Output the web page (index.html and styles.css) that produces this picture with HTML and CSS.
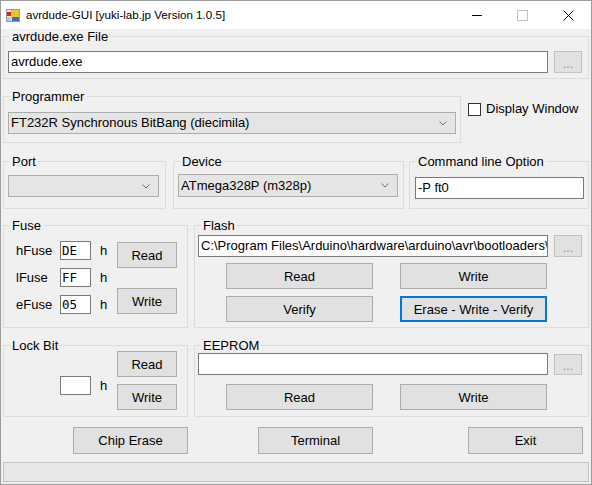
FILE: index.html
```html
<!DOCTYPE html>
<html>
<head>
<meta charset="utf-8">
<title>avrdude-GUI</title>
<link rel="stylesheet" href="styles.css">
</head>
<body>
<div class="window">
  <div class="titlebar">
    <svg class="app-icon" width="14" height="13" viewBox="0 0 14 13">
      <rect x="0.5" y="0.5" width="13" height="12" fill="#e8e8e8" stroke="#9a9a9a"/>
      <rect x="1" y="3" width="4" height="4" fill="#d9261c"/>
      <rect x="5" y="1" width="8" height="7" fill="#f2c22e"/>
      <rect x="6" y="8" width="7" height="4" fill="#2f6fd6"/>
      <rect x="1" y="8" width="4" height="4" fill="#c8c8c8"/>
    </svg>
    <span class="title-text">avrdude-GUI [yuki-lab.jp Version 1.0.5]</span>
    <div class="win-controls">
      <svg class="ctl ctl-min" width="11" height="11" viewBox="0 0 11 11"><line x1="0" y1="5.5" x2="10" y2="5.5" stroke="#000" stroke-width="1"/></svg>
      <svg class="ctl ctl-max" width="11" height="11" viewBox="0 0 11 11"><rect x="0.5" y="0.5" width="10" height="10" fill="none" stroke="#c4c4c4"/></svg>
      <svg class="ctl ctl-close" width="11" height="11" viewBox="0 0 11 11"><path d="M0.5 0.5 L10.5 10.5 M10.5 0.5 L0.5 10.5" stroke="#000" stroke-width="1"/></svg>
    </div>
  </div>

  <div class="client">
    <div class="group g-file">
      <span class="legend">avrdude.exe File</span>
      <div class="path-row">
        <div class="textbox tb-file">avrdude.exe</div>
        <div class="browse">...</div>
      </div>
    </div>

    <div class="row r-prog">
      <div class="group g-prog">
        <span class="legend">Programmer</span>
        <div class="combo cb-prog"><span class="combo-text">FT232R Synchronous BitBang (diecimila)</span><svg class="chev" width="8" height="5" viewBox="0 0 8 5"><path d="M0.5 0.5 L4 4 L7.5 0.5" fill="none" stroke="#6d6d6d"/></svg></div>
      </div>
      <div class="check">
        <span class="check-box"></span>
        <span class="check-label">Display Window</span>
      </div>
    </div>

    <div class="row r-port">
      <div class="group g-port">
        <span class="legend">Port</span>
        <div class="combo cb-port"><span class="combo-text"></span><svg class="chev" width="8" height="5" viewBox="0 0 8 5"><path d="M0.5 0.5 L4 4 L7.5 0.5" fill="none" stroke="#6d6d6d"/></svg></div>
      </div>
      <div class="group g-device">
        <span class="legend">Device</span>
        <div class="combo cb-device"><span class="combo-text">ATmega328P (m328p)</span><svg class="chev" width="8" height="5" viewBox="0 0 8 5"><path d="M0.5 0.5 L4 4 L7.5 0.5" fill="none" stroke="#6d6d6d"/></svg></div>
      </div>
      <div class="group g-cmd">
        <span class="legend">Command line Option</span>
        <div class="textbox tb-cmd">-P ft0</div>
      </div>
    </div>

    <div class="row r-fuse">
      <div class="group g-fuse">
        <span class="legend">Fuse</span>
        <div class="fuse-body">
          <div class="fuse-grid">
            <span class="f-label">hFuse</span><div class="textbox hex">DE</div><span class="f-h">h</span>
            <span class="f-label">lFuse</span><div class="textbox hex">FF</div><span class="f-h">h</span>
            <span class="f-label">eFuse</span><div class="textbox hex">05</div><span class="f-h">h</span>
          </div>
          <div class="fuse-buttons">
            <div class="btn btn-small">Read</div>
            <div class="btn btn-small btn-write-fuse">Write</div>
          </div>
        </div>
      </div>
      <div class="group g-flash">
        <span class="legend">Flash</span>
        <div class="path-row">
          <div class="textbox tb-path">C:\Program Files\Arduino\hardware\arduino\avr\bootloaders\</div>
          <div class="browse">...</div>
        </div>
        <div class="btn-grid flash-grid">
          <div class="btn btn-wide">Read</div>
          <div class="btn btn-wide">Write</div>
          <div class="btn btn-wide">Verify</div>
          <div class="btn btn-wide btn-focus">Erase - Write - Verify</div>
        </div>
      </div>
    </div>

    <div class="row r-lock">
      <div class="group g-lock">
        <span class="legend">Lock Bit</span>
        <div class="lock-body">
          <div class="lock-left">
            <div class="textbox hex"></div><span class="f-h">h</span>
          </div>
          <div class="fuse-buttons lock-buttons">
            <div class="btn btn-small">Read</div>
            <div class="btn btn-small">Write</div>
          </div>
        </div>
      </div>
      <div class="group g-eeprom">
        <span class="legend">EEPROM</span>
        <div class="path-row">
          <div class="textbox tb-path"></div>
          <div class="browse browse-ee">...</div>
        </div>
        <div class="btn-grid eeprom-grid">
          <div class="btn btn-wide">Read</div>
          <div class="btn btn-wide">Write</div>
        </div>
      </div>
    </div>

    <div class="row r-buttons">
      <div class="btn btn-main btn-chip">Chip Erase</div>
      <div class="btn btn-main btn-term">Terminal</div>
      <div class="btn btn-main btn-exit">Exit</div>
    </div>

    <div class="status"></div>
  </div>
</div>
</body>
</html>
```

FILE: styles.css
```css
* { box-sizing: border-box; }

html, body {
  margin: 0;
  padding: 0;
  background: #f0f0f0;
}

body {
  font-family: "Liberation Sans", Arial, sans-serif;
  font-size: 13px;
  color: #000;
}

.window {
  width: 592px;
  height: 485px;
  border: 1px solid #9c9c9c;
  background: #f0f0f0;
  display: flex;
  flex-direction: column;
  overflow: hidden;
}

/* Title bar */
.titlebar {
  height: 28px;
  background: #fff;
  display: flex;
  align-items: center;
  flex: none;
}

.app-icon {
  margin-left: 5px;
  margin-top: 1px;
}

.title-text {
  margin-left: 6px;
  font-size: 11.6px;
  line-height: 16px;
  margin-top: -1px;
}

.win-controls {
  margin-left: auto;
  display: flex;
  align-items: center;
  height: 100%;
}

.ctl { display: block; }
.ctl-min { margin-right: 34px; }
.ctl-max { margin-right: 35px; }
.ctl-close { margin-right: 17px; }

/* Client area */
.client {
  flex: 1;
  padding: 0 2px 0 2px;
  display: flex;
  flex-direction: column;
}

.row {
  display: flex;
  align-items: flex-start;
}

.group {
  position: relative;
  border: 1px solid #dcdcdc;
}

.legend {
  position: absolute;
  left: 6px;
  top: -8px;
  padding: 0 2px;
  background: #f0f0f0;
  line-height: 15px;
  white-space: nowrap;
}

/* controls */
.textbox {
  background: #fff;
  border: 1px solid #7a7a7a;
  height: 22px;
  line-height: 20px;
  padding-left: 2px;
  white-space: nowrap;
  overflow: hidden;
}

.browse {
  width: 28px;
  height: 22px;
  margin-left: 6px;
  background: #e1e1e1;
  border: 1px solid #c2c2c2;
  color: #8d8d8d;
  text-align: center;
  line-height: 24px;
  font-size: 12px;
}

.combo {
  height: 22px;
  background: #e5e5e5;
  border: 1px solid #adadad;
  display: flex;
  align-items: center;
  padding-left: 2px;
}

.combo-text {
  flex: 1;
  white-space: nowrap;
  line-height: 20px;
}

.chev {
  margin-right: 8px;
  flex: none;
}

.btn {
  background: #e1e1e1;
  border: 1px solid #adadad;
  height: 26px;
  display: flex;
  align-items: center;
  justify-content: center;
  white-space: nowrap;
}

.btn-focus {
  border: 2px solid #0078d7;
}

/* File group */
.g-file {
  margin-top: 7px;
  height: 43px;
  padding: 14px 0 0 4px;
}

.path-row {
  display: flex;
  align-items: flex-start;
}

.tb-file { width: 540px; }

/* Programmer row */
.r-prog { margin-top: 17px; }

.g-prog {
  width: 458px;
  height: 47px;
  padding: 15px 0 0 4px;
}

.cb-prog { width: 448px; }

.check {
  display: flex;
  align-items: center;
  margin-left: 7px;
  margin-top: 6px;
}

.check-box {
  width: 13px;
  height: 13px;
  border: 1px solid #333;
  background: #fff;
}

.check-label {
  margin-left: 5px;
  line-height: 15px;
  margin-top: -1px;
}

/* Port row */
.r-port { margin-top: 18px; }

.g-port, .g-device, .g-cmd { height: 48px; }

.g-port {
  width: 163px;
  padding: 13px 0 0 4px;
}

.cb-port { width: 151px; }

.g-device {
  width: 231px;
  margin-left: 7px;
  padding: 12px 0 0 4px;
}

.cb-device { width: 220px; height: 23px; }

.g-cmd {
  flex: 1;
  margin-left: 5px;
  padding: 15px 0 0 5px;
}

.tb-cmd { width: 169px; }

/* Fuse row */
.r-fuse { margin-top: 16px; }

.g-fuse {
  width: 185px;
  height: 103px;
}

.fuse-body {
  display: flex;
  align-items: flex-start;
  padding: 15px 0 0 12px;
}

.fuse-grid {
  width: 101px;
  display: grid;
  grid-template-columns: 44px 31px auto;
  grid-auto-rows: 19px;
  row-gap: 8px;
  align-items: center;
}

.f-label { line-height: 15px; }

.f-h {
  padding-left: 9px;
  line-height: 15px;
}

.textbox.hex {
  width: 31px;
  height: 19px;
  line-height: 17px;
  padding-left: 1px;
  font-family: "DejaVu Sans Mono", "Liberation Mono", monospace;
  font-size: 12.5px;
}

.fuse-buttons {
  display: flex;
  flex-direction: column;
  margin-top: 1px;
}

.btn-small { width: 60px; }

.btn-write-fuse { margin-top: 20px; }

.g-flash {
  flex: 1;
  margin-left: 6px;
  height: 103px;
  padding: 9px 0 0 3px;
}

.tb-path { width: 350px; }

.btn-grid {
  display: grid;
  grid-template-columns: 147px 147px;
  column-gap: 27px;
  row-gap: 7px;
  margin-left: 28px;
}

.btn-wide { width: 147px; }

.flash-grid { margin-top: 6px; }

/* Lock row */
.r-lock { margin-top: 17px; }

.g-lock {
  width: 185px;
  height: 72px;
}

.lock-body {
  display: flex;
  align-items: flex-start;
  padding: 5px 0 0 12px;
}

.lock-left {
  width: 101px;
  padding-left: 44px;
  margin-top: 25px;
  display: flex;
  align-items: center;
}

.lock-buttons {
  margin-top: 0;
  gap: 7px;
}

.g-eeprom {
  flex: 1;
  margin-left: 6px;
  height: 72px;
  padding: 7px 0 0 3px;
}

.browse-ee {
  margin-top: 1px;
  height: 21px;
  line-height: 23px;
}

.eeprom-grid { margin-top: 9px; }

/* Bottom buttons */
.r-buttons {
  margin-top: 10px;
  height: 27px;
}

.btn-main {
  width: 115px;
  height: 27px;
}

.btn-chip { margin-left: 70px; }
.btn-term { margin-left: 70px; }
.btn-exit { margin-left: 95px; }

/* Status bar */
.status {
  margin-top: 8px;
  height: 20px;
  background: #e8e8e8;
  border: 1px solid #c4c4c4;
}
```
